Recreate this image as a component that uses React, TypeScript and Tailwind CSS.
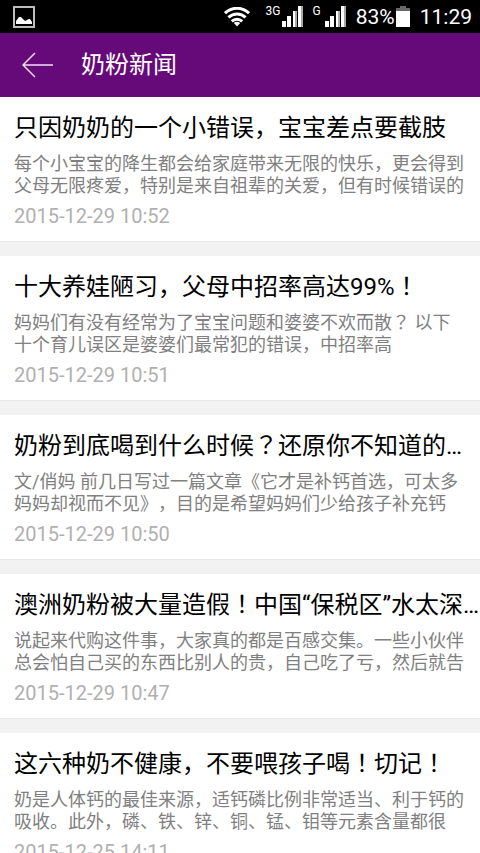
interface Article {
    id: number;
    title: string;
    lines: string[];
    date: string;
}

const articles: Article[] = [
    {
        id: 1,
        title: '只因奶奶的一个小错误，宝宝差点要截肢',
        lines: ['每个小宝宝的降生都会给家庭带来无限的快乐，更会得到', '父母无限疼爱，特别是来自祖辈的关爱，但有时候错误的'],
        date: '2015-12-29 10:52',
    },
    {
        id: 2,
        title: '十大养娃陋习，父母中招率高达99%！',
        lines: ['妈妈们有没有经常为了宝宝问题和婆婆不欢而散？ 以下', '十个育儿误区是婆婆们最常犯的错误，中招率高'],
        date: '2015-12-29 10:51',
    },
    {
        id: 3,
        title: '奶粉到底喝到什么时候？还原你不知道的…',
        lines: ['文/俏妈 前几日写过一篇文章《它才是补钙首选，可太多', '妈妈却视而不见》，目的是希望妈妈们少给孩子补充钙'],
        date: '2015-12-29 10:50',
    },
    {
        id: 4,
        title: '澳洲奶粉被大量造假！中国“保税区”水太深…',
        lines: ['说起来代购这件事，大家真的都是百感交集。一些小伙伴', '总会怕自己买的东西比别人的贵，自己吃了亏，然后就告'],
        date: '2015-12-29 10:47',
    },
    {
        id: 5,
        title: '这六种奶不健康，不要喂孩子喝！切记！',
        lines: ['奶是人体钙的最佳来源，适钙磷比例非常适当、利于钙的', '吸收。此外，磷、铁、锌、铜、锰、钼等元素含量都很'],
        date: '2015-12-25 14:11',
    },
]

// The TC face centres ！ and ？ in their cell, the SC face keeps them to the left
const CjkText = ({ text }: { text: string }) => (
    <>
        {text.split(/([！？])/).map((part, i) => (
            i % 2 === 1
                ? <span key={i} lang="zh-TW" className="font-['Noto_Sans_CJK_TC',sans-serif] leading-none">{part}</span>
                : part
        ))}
    </>
)

const SignalIcon = () => (
    <svg width="21" height="21" viewBox="0 0 21 21" aria-hidden="true">
        <path d="M0 15h4v6H0zM5 10h4v11H5z" fill="#fff" />
        <path d="M11 5h4v16h-4zM16 0h5v21h-5z" fill="#fff" />
        <path d="M13 5h2v16h-2zM19 0h2v21h-2z" fill="#a8a8a8" />
    </svg>
)

const StatusBar = () => (
    <div className="flex h-[33px] items-center justify-between bg-black pl-[13px] pr-2 text-[21px] leading-6 text-white">
        <svg width="22" height="22" viewBox="0 0 22 22" aria-hidden="true">
            <rect x="1" y="1" width="20" height="20" fill="none" stroke="#bdbdbd" strokeWidth="2" />
            <path d="M3 18v-3l3-4h2l3 3 1 1 4-2h1l2 3v2z" fill="#fff" />
        </svg>
        <div className="flex items-center">
            <svg className="mr-4" width="26" height="20" viewBox="0 0 26 20" fill="none" stroke="#fff" strokeWidth="3" aria-hidden="true">
                <path d="M1 6.200C8-.4 18-.4 25 6.200" />
                <path d="M4.400 10.400c5-4.600 12.200-4.600 17.200 0" />
                <path d="M7.800 14.400c3-2.800 7.400-2.800 10.400 0" />
                <path d="M13 19.500l-3.200-3.600c2-1.500 4.400-1.500 6.400 0z" fill="#fff" stroke="none" />
            </svg>
            <span className="mr-px self-start text-xs leading-3">3G</span>
            <SignalIcon />
            <span className="ml-2.5 mr-1 self-start text-xs leading-3">G</span>
            <SignalIcon />
            <span className="ml-2.5">83%</span>
            <svg className="mr-2.5 ml-px" width="14" height="21" viewBox="0 0 14 21" aria-hidden="true">
                <path d="M4 0h6v2h4v4H0V2h4z" fill="#686868" />
                <path d="M0 5h14v16H0z" fill="#fff" />
            </svg>
            <span>11:29</span>
        </div>
    </div>
)

const ArticleItem = ({ article }: { article: Article }) => (
    <li className="border-b border-[#e9e9e9] bg-white">
        <a href={`#article-${article.id}`} className="block overflow-hidden whitespace-pre pb-3 pl-3.5 pt-4">
            <h2 className="text-2xl leading-[30px] text-black">
                <CjkText text={article.title} />
            </h2>
            <p className="mt-2.5 text-lg leading-[22px] text-[#808080]">
                {article.lines.map((line) => (
                    <span key={line} className="block">
                        <CjkText text={line} />
                    </span>
                ))}
            </p>
            <time className="mt-1.5 block text-xl leading-[26px] text-[#b0b0b0]">{article.date}</time>
        </a>
    </li>
)

const App = () => {
    return (
        <div
            lang="zh-CN"
            className="h-screen overflow-hidden bg-[#f2f2f2] font-['Roboto','Noto_Sans_CJK_SC',sans-serif] [text-spacing-trim:space-all]"
        >
            <StatusBar />
            <header className="flex h-16 items-center bg-[#660a7a] pl-[22px] text-white">
                <button type="button" aria-label="返回" className="mr-7">
                    <svg width="31" height="26" viewBox="0 0 31 26" fill="none" stroke="#f0dcf4" strokeWidth="1.5">
                        <path d="M13 1L1 13l12 12M1 13h30" />
                    </svg>
                </button>
                <h1 className="text-2xl leading-[30px]">奶粉新闻</h1>
            </header>
            <ul className="flex flex-col gap-3.5">
                {articles.map((article) => (
                    <ArticleItem key={article.id} article={article} />
                ))}
            </ul>
        </div>
    )
}

export default App
